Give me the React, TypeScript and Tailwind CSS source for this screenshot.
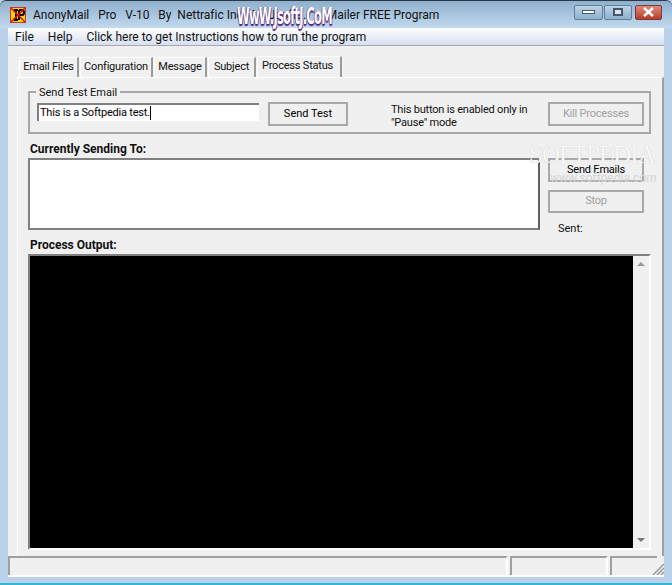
import React from 'react';

const font = "[font-family:'Roboto',sans-serif]";
const txt = 'text-[11px] tracking-[-0.2px]';

const Tab = ({ label, w }: { label: string; w: string }) => (
  <div className={`${w} flex items-center justify-center whitespace-nowrap bg-[#f0f0f0] border-t border-l border-white border-r-2 border-r-[#9a9a9a] ${txt} text-[#111]`}>
    {label}
  </div>
);

const Btn = ({ label, w = 'w-[96px]', h = 'h-[24px]', off = false }: { label: string; w?: string; h?: string; off?: boolean }) => (
  <div className={`${w} ${h} shrink-0 flex items-center justify-center whitespace-nowrap border-2 border-[#a9a9a9] ${txt} ${off ? 'text-[#a0a0a0]' : 'text-black'}`}>
    {label}
  </div>
);

const WinBtn = ({ w, cls, children }: { w: string; cls: string; children: React.ReactNode }) => (
  <div className={`${w} h-[15px] flex items-center justify-center rounded-[2px] border border-[#5f7f9c] ${cls}`}>{children}</div>
);

export default function App() {
  return (
    <div className={`relative w-[672px] h-[585px] overflow-hidden flex flex-col bg-[#b9d2ea] ${font}`}>
      {/* title bar */}
      <div className="h-[28px] shrink-0 flex items-center pl-[10px] pr-[10px] pt-[1px] bg-gradient-to-b from-[#8fb0cd] via-[#a9c5de] to-[#c3d9ee] border-t border-[#2b3a45] rounded-t-[6px]">
        <svg width="16" height="16" viewBox="0 0 16 16" className="shrink-0">
          <rect width="16" height="16" fill="#f5d90a" />
          <rect x="0.5" y="0.5" width="15" height="15" fill="none" stroke="#c33" />
          <path d="M4 3h4M6 3v10M4 13h4M9 3v10M9 3h3q2 0 2 2.500t-2 2.500h-3" fill="none" stroke="#000" strokeWidth="2" />
          <path d="M1 1l14 14M15 1L1 15" stroke="#e01010" strokeWidth="1.500" />
        </svg>
        <span className="ml-[7px] text-[12px] tracking-[-0.02px] text-[#111] whitespace-pre">AnonyMail   Pro   V-10   By  Nettrafic Inc.  Mr.JsoftJ.       Mailer FREE Program</span>
        <div className="ml-auto flex items-center gap-[1px] -mt-[6px]">
          <WinBtn w="w-[29px]" cls="bg-gradient-to-b from-[#bcd3e8] to-[#8fb0cc]">
            <span className="w-[13px] h-[4px] bg-white border border-[#44586b]" />
          </WinBtn>
          <WinBtn w="w-[28px]" cls="bg-gradient-to-b from-[#bcd3e8] to-[#8fb0cc]">
            <span className="w-[10px] h-[8px] border-2 border-[#44586b] bg-white/60" />
          </WinBtn>
          <WinBtn w="w-[27px] ml-[2px]" cls="bg-gradient-to-b from-[#dd8b7c] to-[#b8392a] border-[#7c3a34]">
            <svg width="13" height="10" viewBox="0 0 13 10"><path d="M2 1l9 8M11 1L2 9" stroke="#fff" strokeWidth="2.500" /></svg>
          </WinBtn>
        </div>
      </div>

      {/* client area */}
      <div className="mx-[8px] flex-1 min-h-0 flex flex-col bg-[#f0f0f0]">
        {/* menu bar */}
        <div className="h-[18px] shrink-0 flex items-center pl-[7px] text-[12px] text-[#111] bg-gradient-to-b from-white to-[#d6dff0] border-b border-[#a4a8b8]">
          <span>File</span>
          <span className="ml-[14px]">Help</span>
          <span className="ml-[14px]">Click here to get Instructions how to run the program</span>
        </div>

        <div className="flex-1 min-h-0 flex flex-col pl-[9px] pt-[10px]">
          {/* tabs */}
          <div className="flex items-start pl-[2px] gap-[1px] h-[21px] shrink-0">
            <Tab label="Email Files" w="w-[60px] h-[20px] mt-[1px]" />
            <Tab label="Configuration" w="w-[73px] h-[20px] mt-[1px]" />
            <Tab label="Message" w="w-[53px] h-[20px] mt-[1px]" />
            <Tab label="Subject" w="w-[48px] h-[20px] mt-[1px]" />
            <Tab label="Process Status" w="w-[85px] h-[22px] pb-[3px] pr-[3px]" />
          </div>

          {/* panel */}
          <div className="flex-1 min-h-0 flex flex-col border-t border-l border-white border-r-2 border-r-[#a0a0a0] pl-[10px] pr-[11px] pt-[13px]">
            {/* group box */}
            <div className="relative h-[43px] shrink-0 border-2 border-[#a8a8a8] flex items-start pl-[7px] pt-[9px]">
              <span className="absolute -top-[8px] left-[6px] px-[3px] bg-[#f0f0f0] text-[11px] leading-[16px] text-[#111]">Send Test Email</span>
              <div className={`w-[222px] h-[18px] mt-[1px] shrink-0 bg-white border-t-2 border-l-2 border-[#808080] pl-[1px] ${txt} leading-[16px] text-black flex items-center whitespace-nowrap`}>
                This is a Softpedia test.<span className="w-[1px] h-[14px] bg-black" />
              </div>
              <div className="w-[80px] h-[24px] ml-[9px] shrink-0 flex items-center justify-center border-2 border-[#a9a9a9] text-[11px] text-black whitespace-nowrap">Send Test</div>
              <div className={`ml-[43px] mt-[1px] ${txt} leading-[13px] text-[#111] w-[157px] whitespace-nowrap`}>
                This button is enabled only in
                <br />
                "Pause" mode
              </div>
              <Btn label="Kill Processes" w="w-[96px]" off />
            </div>

            {/* sending row */}
            <div className="mt-[7px] flex gap-[8px] shrink-0">
              <div className="flex flex-col w-[512px]">
                <span className="h-[17px] pl-[2px] text-[12px] leading-[16px] font-bold text-[#111]">Currently Sending To:</span>
                <div className="h-[72px] bg-white border-2 border-[#808080] border-r-[#606060]" />
              </div>
              <div className="flex flex-col pt-[17px]">
                <Btn label="Send Emails" />
                <Btn label="Stop" w="w-[96px] mt-[8px]" h="h-[23px]" off />
                <span className="ml-[10px] mt-[9px] text-[11px] leading-[14px] text-[#111]">Sent:</span>
              </div>
            </div>

            <span className="h-[18px] shrink-0 pl-[2px] text-[12px] leading-[18px] font-bold text-[#111]">Process Output:</span>

            {/* output */}
            <div className="h-[296px] shrink-0 flex bg-black border-t-2 border-l-2 border-[#808080] border-b-2 border-b-white border-r-2 border-r-white">
              <div className="flex-1" />
              <div className="w-[16px] flex flex-col items-center justify-between py-[6px] bg-[#f0f0f0]">
                <span className="w-0 h-0 border-x-[4px] border-x-transparent border-b-[4px] border-b-[#999]" />
                <span className="w-0 h-0 border-x-[4px] border-x-transparent border-t-[4px] border-t-[#777]" />
              </div>
            </div>
          </div>
        </div>

        {/* status bar */}
        <div className="relative h-[21px] shrink-0 flex gap-[2px] pr-[7px] border-b-2 border-white">
          <div className="w-[500px] border-t-2 border-l-2 border-[#a0a0a0] border-r-2 border-r-white" />
          <div className="w-[98px] border-t-2 border-l-2 border-[#a0a0a0] border-r-2 border-r-white" />
          <div className="flex-1 border-t-2 border-l-2 border-[#a0a0a0]" />
          <svg width="12" height="12" viewBox="0 0 12 12" className="absolute right-0 bottom-0">
            <path d="M1 12L12 1M5 12l7-7M9 12l3-3" stroke="#999" strokeWidth="1.500" />
          </svg>
        </div>
      </div>

      <div className="h-[8px] shrink-0 bg-[#b9d2ea] border-b-2 border-[#35b6d6]" />

      {/* watermarks */}
      <div className="absolute left-[237px] top-[3px] text-[23px] leading-[26px] font-bold tracking-[-1.500px] text-white [font-family:'DejaVu_Sans',sans-serif] [text-shadow:1px_1px_0_#5a2a80,-1px_0_0_#5a2a80,0_2px_1px_#5a2a80] [transform:scaleX(0.5)] origin-left whitespace-nowrap">
        WwW.JsoftJ.CoM
      </div>
      <div className="absolute left-[529px] top-[142px] text-[25px] leading-[26px] tracking-[-1px] text-[#f8f8f8] [font-family:'Liberation_Serif',serif] [text-shadow:0_0_1px_#bbb] whitespace-nowrap">
        SOFTPEDIA
      </div>
      <div className="absolute left-[550px] top-[171px] text-[12px] leading-[14px] text-[#d4d4d4] whitespace-nowrap">www.softpedia.com</div>
    </div>
  );
}
